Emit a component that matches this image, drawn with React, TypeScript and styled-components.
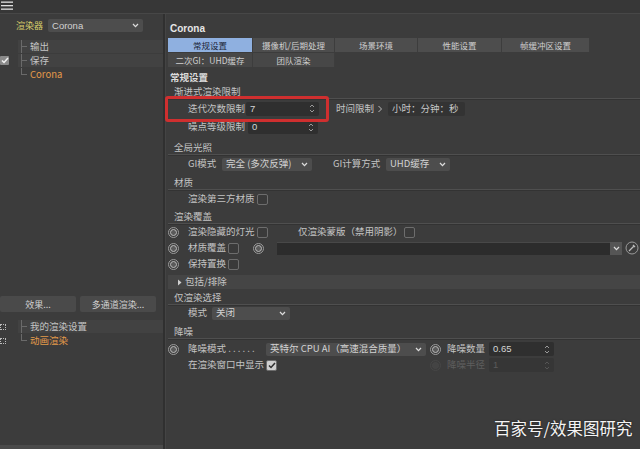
import React from "react";
import styled, { createGlobalStyle, css } from "styled-components";

const Global = createGlobalStyle`
  html, body { margin: 0; padding: 0; background: #3b3b3b; }
  body { font-family: "Noto Sans CJK SC", "Noto Sans", "Liberation Sans", sans-serif; }
  * { box-sizing: border-box; }
`;

const Frame = styled.div`
  width: 640px;
  height: 449px;
  overflow: hidden;
  position: relative;
  display: flex;
  flex-direction: column;
  background: #3c3c3c;
  color: #c4c4c4;
  font-size: 9.5px;
  line-height: 1;
`;

const TopBar = styled.div`
  height: 14px;
  flex: none;
  background: #373737;
  border-bottom: 1px solid #474747;
  padding: 1px 0 0 1px;
`;

const Body = styled.div`
  flex: 1;
  display: flex;
  min-height: 0;
`;

const LeftPanel = styled.div`
  width: 163px;
  flex: none;
  display: flex;
  flex-direction: column;
`;

const Divider = styled.div`
  width: 3px;
  flex: none;
  background: #303030;
  border-right: 1px solid #444;
`;

const RightPanel = styled.div`
  flex: 1;
  display: flex;
  flex-direction: column;
  padding: 8px 0 0 2px;
  min-width: 0;
`;

/* ---------- left ---------- */
const RendererRow = styled.div`
  display: flex;
  align-items: center;
  height: 15px;
  margin-top: 4px;
  padding-left: 16px;
  gap: 5px;
`;

const YellowLabel = styled.span`
  color: #d8cc6a;
  font-size: 9px;
`;

const Select = styled.div<{ $w: number }>`
  width: ${(p) => p.$w}px;
  height: 13px;
  flex: none;
  background: #4d4d4d;
  border-radius: 2px;
  display: flex;
  align-items: center;
  justify-content: space-between;
  padding: 0 4px 0 4px;
  color: #d2d2d2;
  font-size: 9.5px;
  white-space: nowrap;
  overflow: hidden;
`;

const Tree = styled.div`
  margin-top: 7px;
  display: flex;
  flex-direction: column;
  gap: 1px;
`;

const TreeRow = styled.div<{ $orange?: boolean }>`
  height: 13px;
  display: flex;
  align-items: stretch;
  color: ${(p) => (p.$orange ? "#e39a4a" : "#c4c4c4")};
`;

const Gutter = styled.div`
  width: 18px;
  flex: none;
  display: flex;
  align-items: center;
`;

const TreeCell = styled.div<{ $shade?: boolean; $last?: boolean }>`
  flex: 1;
  display: flex;
  align-items: center;
  background: ${(p) => (p.$shade ? "#424242" : "transparent")};
  position: relative;
  padding-left: 12px;
  font-size: 9.5px;
  &::before {
    content: "";
    position: absolute;
    left: 3px;
    top: 0;
    bottom: ${(p) => (p.$last ? "6px" : "0")};
    border-left: 1px solid #6a6a6a;
  }
  &::after {
    content: "";
    position: absolute;
    left: 3px;
    top: 6px;
    width: 6px;
    border-top: 1px solid #6a6a6a;
  }
`;

const LeftCheck = styled.div`
  width: 9px;
  height: 9px;
  background: #8a8a8a;
  border-radius: 1px;
  display: flex;
  align-items: center;
  justify-content: center;
`;

const ButtonRow = styled.div`
  margin-top: 215px;
  display: flex;
  gap: 4px;
  height: 16px;
`;

const PanelButton = styled.div<{ $w: number }>`
  width: ${(p) => p.$w}px;
  height: 16px;
  background: #4a4a4a;
  border-radius: 2px;
  display: flex;
  align-items: center;
  justify-content: center;
  color: #d0d0d0;
  font-size: 9px;
`;

const PresetList = styled.div`
  margin-top: 8px;
  display: flex;
  flex-direction: column;
  gap: 1px;
`;

const DotIcon = styled.div`
  width: 6px;
  height: 6px;
  border: 1px dotted #bdbdbd;
`;

const BottomStrip = styled.div`
  margin-top: auto;
  height: 4px;
  background: #4a4a4a;
`;

/* ---------- right ---------- */
const Title = styled.div`
  height: 14px;
  padding-left: 2px;
  font-weight: 700;
  font-size: 10px;
  line-height: 14px;
  color: #e6e6e6;
  font-family: "Liberation Sans", "Noto Sans CJK SC", sans-serif;
`;

const Tabs = styled.div`
  margin-top: 2px;
  width: 424px;
  display: flex;
  flex-wrap: wrap;
  row-gap: 1px;
`;

const Tab = styled.div<{ $w: number; $active?: boolean; $second?: boolean }>`
  width: ${(p) => p.$w}px;
  height: 14px;
  display: flex;
  align-items: center;
  justify-content: center;
  font-size: 8.5px;
  white-space: nowrap;
  border-right: 1px solid #3d3d3d;
  background: ${(p) => (p.$active ? "#8fb0e0" : p.$second ? "#474747" : "#4d4d4d")};
  color: ${(p) => (p.$active ? "#1c2638" : "#cfcfcf")};
`;

const SectionTitle = styled.div`
  margin-top: 4px;
  height: 13px;
  line-height: 13px;
  padding-left: 2px;
  font-weight: 700;
  color: #dcdcdc;
  font-size: 9.5px;
`;

const GroupHeader = styled.div<{ $mt: number }>`
  margin-top: ${(p) => p.$mt}px;
  height: 13px;
  display: flex;
  align-items: center;
  padding-left: 6px;
  color: #c4c4c4;
  border-bottom: 1px solid #4f4f4f;
  box-shadow: 0 1px 0 #333;
`;

const Row = styled.div<{ $mt?: number; $h?: number }>`
  margin-top: ${(p) => p.$mt ?? 0}px;
  height: ${(p) => p.$h ?? 16}px;
  display: flex;
  align-items: center;
  white-space: nowrap;
`;

const Cell = styled.div<{ $w: number }>`
  width: ${(p) => p.$w}px;
  flex: none;
  display: flex;
  align-items: center;
`;

const Label = styled.span<{ $dim?: boolean; $w?: number }>`
  color: ${(p) => (p.$dim ? "#5e5e5e" : "#c4c4c4")};
  ${(p) => (p.$w ? css`width: ${p.$w}px; flex: none;` : "")}
  white-space: nowrap;
`;

const NumField = styled.div<{ $w: number; $dim?: boolean }>`
  width: ${(p) => p.$w}px;
  height: 14px;
  flex: none;
  background: ${(p) => (p.$dim ? "#363636" : "#2f2f2f")};
  border-radius: 2px;
  display: flex;
  align-items: center;
  justify-content: space-between;
  padding: 0 4px 0 4px;
  color: ${(p) => (p.$dim ? "#5a5a5a" : "#d6d6d6")};
  font-size: 9.5px;
  font-family: "Liberation Sans", "Noto Sans CJK SC", sans-serif;
`;

const TimeField = styled.div`
  width: 77px;
  height: 14px;
  flex: none;
  background: #333;
  border-radius: 2px;
  display: flex;
  align-items: center;
  padding-left: 4px;
  color: #c8c8c8;
`;

const Check = styled.div<{ $on?: boolean }>`
  width: 11px;
  height: 11px;
  flex: none;
  border: 1px solid #6d6d6d;
  border-radius: 2px;
  background: ${(p) => (p.$on ? "#cfcfcf" : "#3a3a3a")};
  display: flex;
  align-items: center;
  justify-content: center;
`;

const Radio = styled.div<{ $dim?: boolean }>`
  width: 11px;
  height: 11px;
  flex: none;
  border-radius: 50%;
  border: 1px solid ${(p) => (p.$dim ? "#474747" : "#9a9a9a")};
  display: flex;
  align-items: center;
  justify-content: center;
  &::after {
    content: "";
    width: 5px;
    height: 5px;
    border-radius: 50%;
    border: 1px solid ${(p) => (p.$dim ? "#474747" : "#bdbdbd")};
    background: ${(p) => (p.$dim ? "#444" : "#5a5a5a")};
  }
`;

const LinkField = styled.div`
  flex: 1;
  height: 13px;
  background: #2c2c2c;
  border-top: 1px solid #484848;
`;

const SmallDrop = styled.div`
  width: 12px;
  height: 13px;
  background: #555;
  display: flex;
  align-items: center;
  justify-content: center;
  flex: none;
`;

const CollapseRow = styled.div`
  margin-top: 3px;
  height: 14px;
  background: #454545;
  display: flex;
  align-items: center;
  padding-left: 9px;
  gap: 3px;
  color: #c4c4c4;
`;

const Spacer = styled.div<{ $w: number }>`
  width: ${(p) => p.$w}px;
  flex: none;
`;

const RedBox = styled.div`
  position: absolute;
  left: 165px;
  top: 96px;
  width: 164px;
  height: 26px;
  border: 3px solid #cf2f2f;
  border-radius: 3px;
  pointer-events: none;
`;

const Watermark = styled.div`
  position: absolute;
  left: 494px;
  top: 420px;
  font-size: 16.5px;
  color: #f4f4f4;
  text-shadow: 0 0 2px rgba(0, 0, 0, 0.6);
`;

/* ---------- icons ---------- */
const Hamburger = () => (
  <svg width="12" height="10" viewBox="0 0 12 10">
    <rect x="0" y="0.5" width="12" height="1.3" fill="#e0e0e0" />
    <rect x="0" y="4" width="12" height="1.3" fill="#e0e0e0" />
    <rect x="0" y="7.5" width="12" height="1.3" fill="#e0e0e0" />
  </svg>
);

const Chevron = ({ color = "#dcdcdc" }: { color?: string }) => (
  <svg width="7" height="5" viewBox="0 0 7 5">
    <path d="M1 1 L3.5 3.6 L6 1" fill="none" stroke={color} strokeWidth="1.3" />
  </svg>
);

const Spin = ({ color = "#9a9a9a" }: { color?: string }) => (
  <svg width="6" height="11" viewBox="0 0 6 11">
    <path d="M1 4 L3 2 L5 4" fill="none" stroke={color} strokeWidth="1" />
    <path d="M1 7 L3 9 L5 7" fill="none" stroke={color} strokeWidth="1" />
  </svg>
);

const Tick = ({ color }: { color: string }) => (
  <svg width="8" height="7" viewBox="0 0 8 7">
    <path d="M1 3.5 L3 5.5 L7 1" fill="none" stroke={color} strokeWidth="1.5" />
  </svg>
);

const Caret = () => (
  <svg width="5" height="7" viewBox="0 0 5 7">
    <path d="M1 0.5 L4.5 3.5 L1 6.5 Z" fill="#cfcfcf" />
  </svg>
);

const SmallArrow = () => (
  <svg width="6" height="8" viewBox="0 0 6 8">
    <path d="M1.5 1 L4.5 4 L1.5 7" fill="none" stroke="#bbb" strokeWidth="1" />
  </svg>
);

const PickIcon = () => (
  <svg width="14" height="14" viewBox="0 0 14 14">
    <circle cx="7" cy="7" r="6" fill="none" stroke="#9a9a9a" strokeWidth="1" />
    <path d="M4 10 L9 5 M8 4 L10 6" stroke="#bdbdbd" strokeWidth="1.3" fill="none" />
  </svg>
);

export default function App() {
  return (
    <Frame>
      <Global />
      <TopBar>
        <Hamburger />
      </TopBar>
      <Body>
        <LeftPanel>
          <RendererRow>
            <YellowLabel>渲染器</YellowLabel>
            <Select $w={95}>
              <span style={{ fontFamily: '"Liberation Sans", sans-serif' }}>Corona</span>
              <Chevron />
            </Select>
          </RendererRow>
          <Tree>
            <TreeRow>
              <Gutter />
              <TreeCell $shade>输出</TreeCell>
            </TreeRow>
            <TreeRow>
              <Gutter>
                <LeftCheck>
                  <Tick color="#f2f2f2" />
                </LeftCheck>
              </Gutter>
              <TreeCell $shade>保存</TreeCell>
            </TreeRow>
            <TreeRow $orange>
              <Gutter />
              <TreeCell $last>Corona</TreeCell>
            </TreeRow>
          </Tree>
          <ButtonRow>
            <PanelButton $w={76}>效果...</PanelButton>
            <PanelButton $w={76}>多通道渲染...</PanelButton>
          </ButtonRow>
          <PresetList>
            <TreeRow>
              <Gutter>
                <DotIcon />
              </Gutter>
              <TreeCell $shade>我的渲染设置</TreeCell>
            </TreeRow>
            <TreeRow $orange>
              <Gutter>
                <DotIcon />
              </Gutter>
              <TreeCell $last>动画渲染</TreeCell>
            </TreeRow>
          </PresetList>
          <BottomStrip />
        </LeftPanel>
        <Divider />
        <RightPanel>
          <Title>Corona</Title>
          <Tabs>
            <Tab $w={85} $active>常规设置</Tab>
            <Tab $w={82}>摄像机/后期处理</Tab>
            <Tab $w={83}>场景环境</Tab>
            <Tab $w={84}>性能设置</Tab>
            <Tab $w={88}>帧缓冲区设置</Tab>
            <Tab $w={85} $second>二次GI：UHD缓存</Tab>
            <Tab $w={82} $second>团队渲染</Tab>
          </Tabs>
          <SectionTitle>常规设置</SectionTitle>
          <GroupHeader $mt={2}>渐进式渲染限制</GroupHeader>
          <Row $mt={1} $h={17}>
            <Spacer $w={20} />
            <Label $w={58}>迭代次数限制</Label>
            <NumField $w={73}>
              <span>7</span>
              <Spin />
            </NumField>
            <Spacer $w={17} />
            <Label $w={41}>时间限制</Label>
            <SmallArrow />
            <Spacer $w={5} />
            <TimeField>小时：分钟：秒</TimeField>
          </Row>
          <Row $mt={2} $h={16}>
            <Spacer $w={20} />
            <Label $w={60}>噪点等级限制</Label>
            <NumField $w={70}>
              <span>0</span>
              <Spin />
            </NumField>
          </Row>
          <GroupHeader $mt={7}>全局光照</GroupHeader>
          <Row $mt={1} $h={16}>
            <Spacer $w={20} />
            <Label $w={34}>GI模式</Label>
            <Select $w={90}>
              <span>完全 (多次反弹)</span>
              <Chevron />
            </Select>
            <Spacer $w={21} />
            <Label $w={53}>GI计算方式</Label>
            <Select $w={64}>
              <span>UHD缓存</span>
              <Chevron />
            </Select>
          </Row>
          <GroupHeader $mt={5}>材质</GroupHeader>
          <Row $mt={1} $h={16}>
            <Spacer $w={20} />
            <Label $w={69}>渲染第三方材质</Label>
            <Check />
          </Row>
          <GroupHeader $mt={4}>渲染覆盖</GroupHeader>
          <Row $h={16}>
            <Cell $w={20}>
              <Radio />
            </Cell>
            <Label $w={69}>渲染隐藏的灯光</Label>
            <Check />
            <Spacer $w={30} />
            <Label $w={106}>仅渲染蒙版（禁用阴影）</Label>
            <Check />
          </Row>
          <Row $h={16}>
            <Cell $w={20}>
              <Radio />
            </Cell>
            <Label $w={40}>材质覆盖</Label>
            <Check />
            <Spacer $w={14} />
            <Radio />
            <Spacer $w={13} />
            <LinkField />
            <SmallDrop>
              <Chevron />
            </SmallDrop>
            <Spacer $w={3} />
            <PickIcon />
            <Spacer $w={1} />
          </Row>
          <Row $h={16}>
            <Cell $w={20}>
              <Radio />
            </Cell>
            <Label $w={40}>保持置换</Label>
            <Check />
          </Row>
          <CollapseRow>
            <Caret />
            <span>包括/排除</span>
          </CollapseRow>
          <GroupHeader $mt={3}>仅渲染选择</GroupHeader>
          <Row $h={16}>
            <Spacer $w={20} />
            <Label $w={24}>模式</Label>
            <Select $w={78}>
              <span>关闭</span>
              <Chevron />
            </Select>
          </Row>
          <GroupHeader $mt={5}>降噪</GroupHeader>
          <Row $mt={2} $h={16}>
            <Cell $w={20}>
              <Radio />
            </Cell>
            <Label $w={78}>降噪模式 . . . . . .</Label>
            <Select $w={160}>
              <span>英特尔 CPU AI（高速混合质量）</span>
              <Chevron />
            </Select>
            <Spacer $w={4} />
            <Radio />
            <Spacer $w={6} />
            <Label $w={42}>降噪数量</Label>
            <NumField $w={65}>
              <span>0.65</span>
              <Spin />
            </NumField>
          </Row>
          <Row $h={16}>
            <Spacer $w={20} />
            <Label $w={78}>在渲染窗口中显示</Label>
            <Check $on>
              <Tick color="#2e2e2e" />
            </Check>
            <Spacer $w={153} />
            <Radio $dim />
            <Spacer $w={6} />
            <Label $w={42} $dim>降噪半径</Label>
            <NumField $w={65} $dim>
              <span>1</span>
              <Spin color="#555" />
            </NumField>
          </Row>
        </RightPanel>
      </Body>
      <RedBox />
      <Watermark>百家号/效果图研究</Watermark>
    </Frame>
  );
}
